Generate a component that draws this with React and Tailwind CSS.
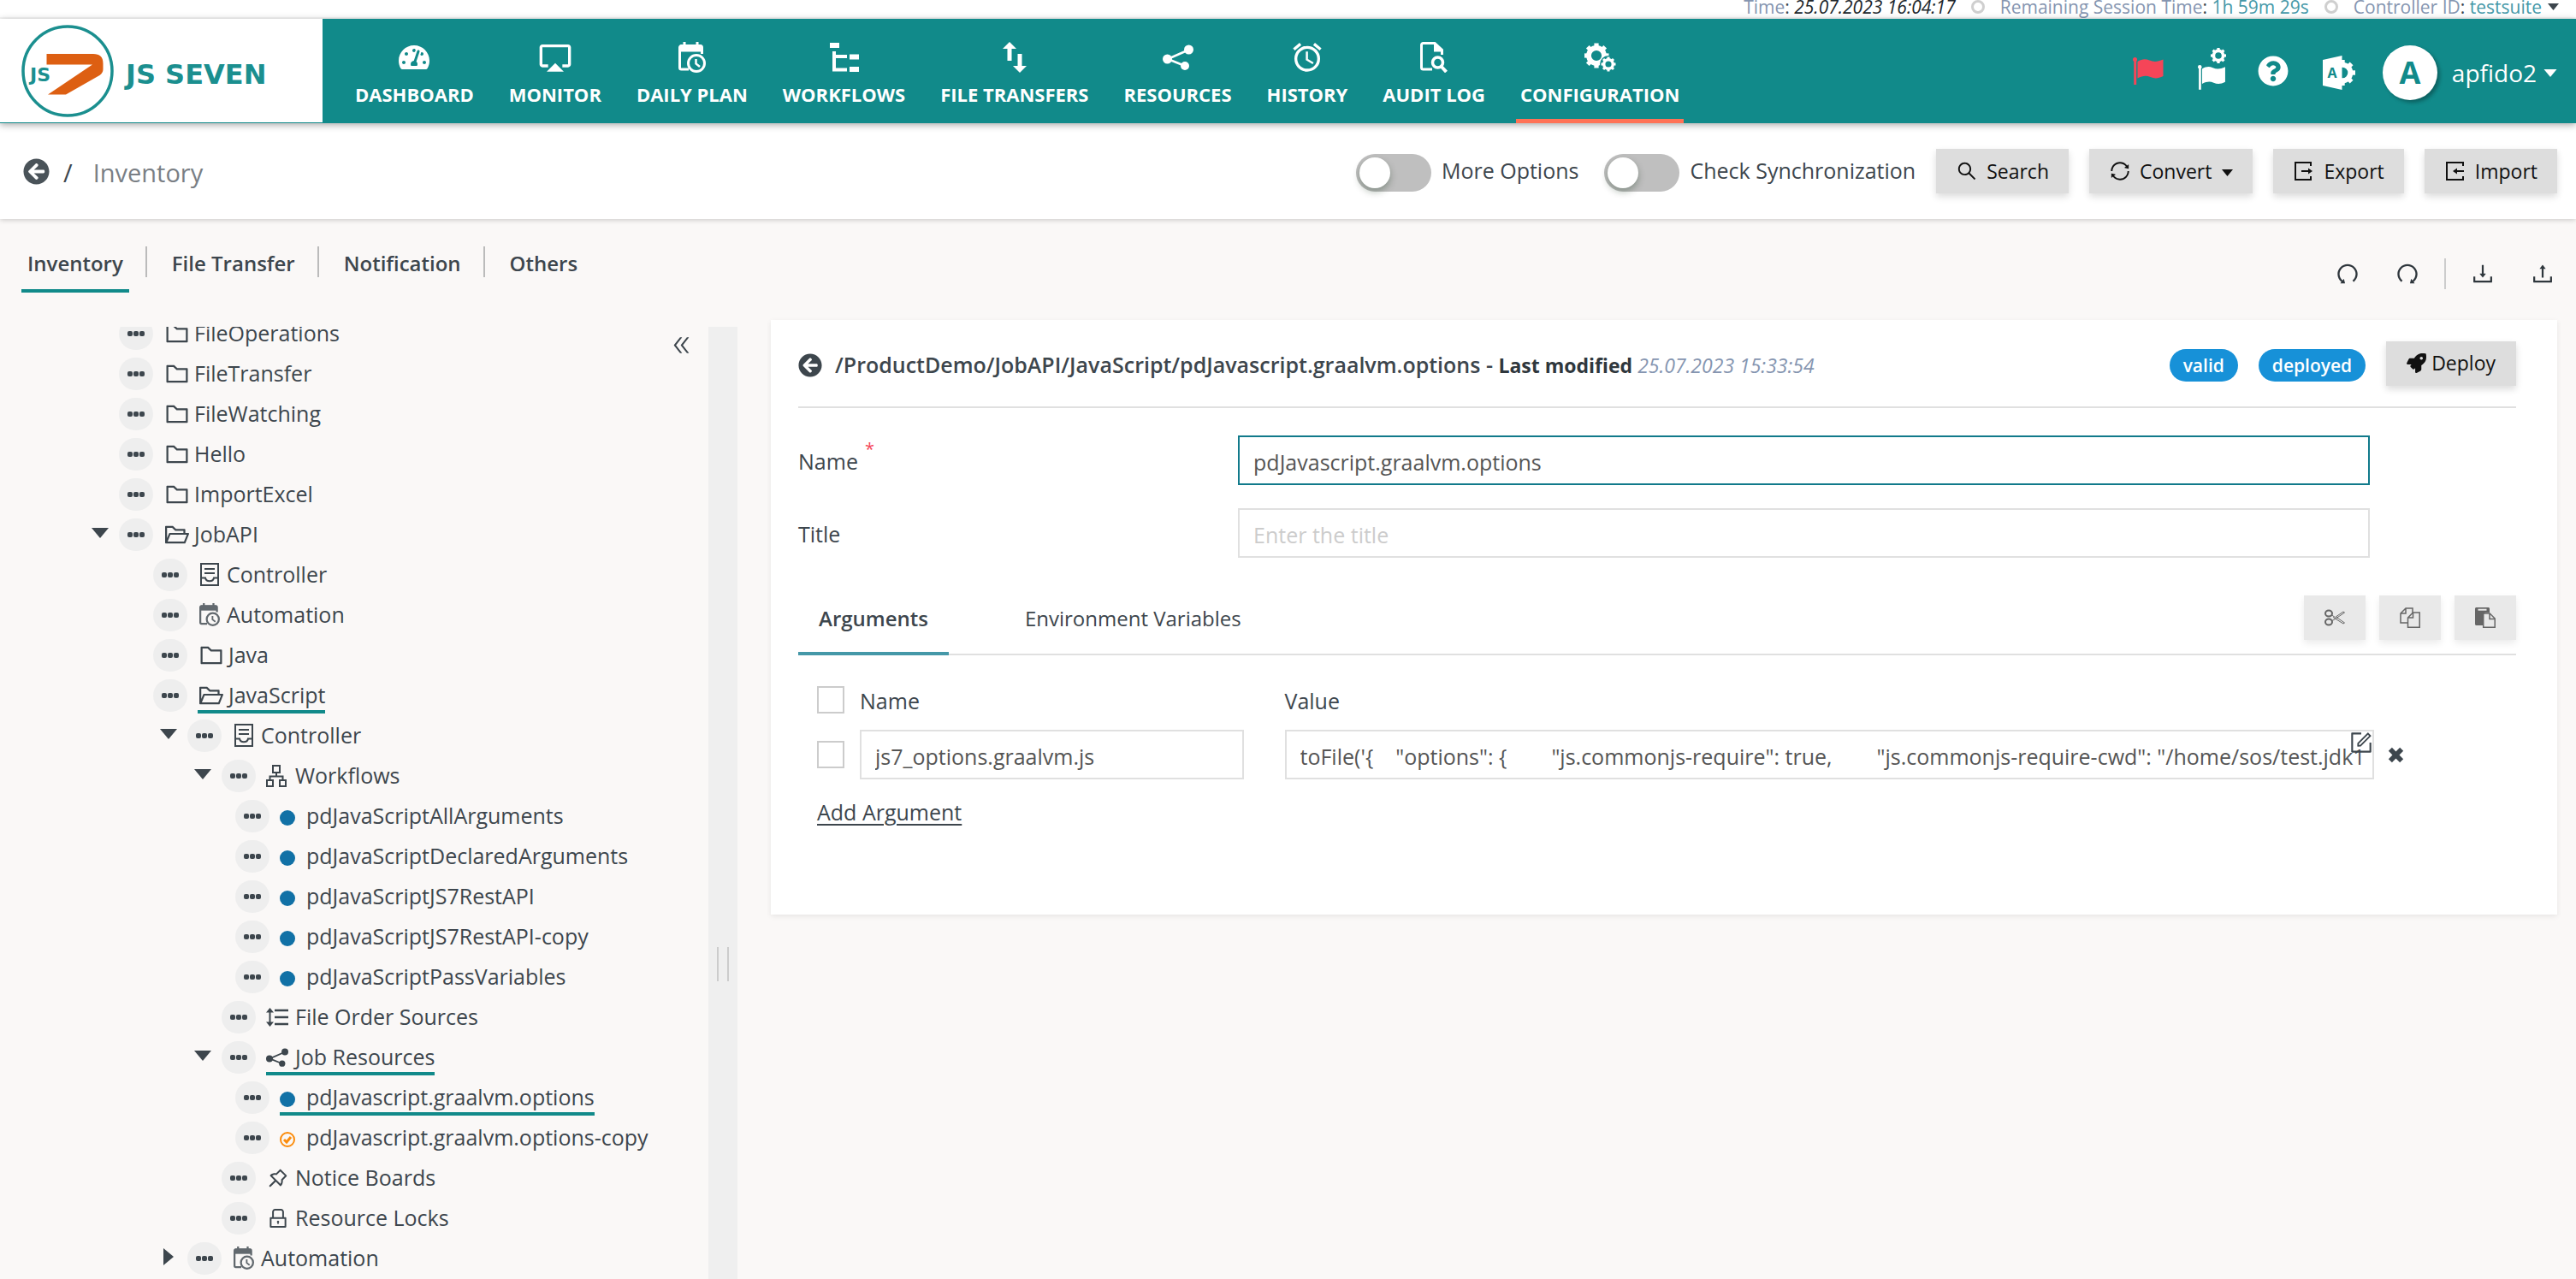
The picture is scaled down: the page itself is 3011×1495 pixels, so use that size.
import { useState } from 'react';
import {
  AiOutlineDoubleLeft,
  AiOutlineDownload,
  AiOutlineFolder,
  AiOutlineFolderOpen,
  AiOutlineForm,
  AiOutlineLock,
  AiOutlinePushpin,
  AiOutlineRedo,
  AiOutlineSearch,
  AiOutlineSync,
  AiOutlineUndo,
  AiOutlineUpload,
} from 'react-icons/ai';
import { FaArrowCircleLeft, FaQuestionCircle, FaRocket, FaTachometerAlt } from 'react-icons/fa';
import { MdAlarm, MdAirplay } from 'react-icons/md';

const teeth = [0, 45, 90, 135, 180, 225, 270, 315];

function Gear({ cx, cy, r }) {
  return (
    <g fill="none" stroke="currentColor">
      <circle cx={cx} cy={cy} r={r * 0.62} strokeWidth={r * 0.4} />
      {teeth.map((a) => (
        <path key={a} d={`M${cx} ${cy - r * 0.7}V${cy - r}`} strokeWidth={r * 0.36} transform={`rotate(${a} ${cx} ${cy})`} />
      ))}
    </g>
  );
}

function CalendarClock({ className }) {
  return (
    <svg className={className} viewBox="0 0 32 36" fill="none" stroke="currentColor">
      <path d="M7 0v6M22 0v6" strokeWidth="3" />
      <path d="M12 32H3.500a2 2 0 0 1-2-2V6.500a2 2 0 0 1 2-2h22a2 2 0 0 1 2 2V14" strokeWidth="3" />
      <path d="M2 4h25v7H2z" fill="currentColor" strokeWidth="1" />
      <circle cx="21" cy="25" r="9.500" strokeWidth="3" />
      <path d="M20.500 20v5.500l4.500 3.500" strokeWidth="2.500" />
    </svg>
  );
}

function TreeStructure({ className }) {
  return (
    <svg className={className} viewBox="0 0 34 34" fill="none" stroke="currentColor">
      <path d="M0 0h11v6H0zM23 13.500h11v6H23zM23 28h11v6H23z" fill="currentColor" stroke="none" />
      <path d="M5 10v21.500h15M5 16h15" strokeWidth="4" />
    </svg>
  );
}

function TransferArrows({ className }) {
  return (
    <svg className={className} viewBox="0 0 28 36" fill="currentColor">
      <path d="M8 0l8 8h-5.500v14h-5V8H0zM20 36l8-8h-5.500V14h-5v14H12z" />
    </svg>
  );
}

function ShareNodes({ className }) {
  return (
    <svg className={className} viewBox="0 0 36 30" fill="currentColor">
      <path d="M6 17L31 6M6 17l20 8" stroke="currentColor" strokeWidth="2.500" />
      <circle cx="5.500" cy="17" r="5.500" />
      <circle cx="30.500" cy="6" r="5.500" />
      <circle cx="26" cy="25" r="5" />
    </svg>
  );
}

function PageSearch({ className }) {
  return (
    <svg className={className} viewBox="0 0 32 36" fill="none" stroke="currentColor" strokeWidth="3">
      <path d="M14 32H3.500a2 2 0 0 1-2-2V3.500a2 2 0 0 1 2-2H17l8.500 8V15" />
      <path d="M16 1v10.500h11z" fill="currentColor" stroke="none" />
      <circle cx="20.500" cy="24" r="6" strokeWidth="3.500" />
      <path d="M24.500 28.500l6 6.500" strokeWidth="4" />
    </svg>
  );
}

function Cogs({ className }) {
  return (
    <svg className={className} viewBox="0 0 37 34">
      <Gear cx={14} cy={15} r={14.5} />
      <circle cx="28" cy="25" r="10" fill="#118a8a" />
      <Gear cx={28} cy={25} r={8.5} />
    </svg>
  );
}

function Flag({ className }) {
  return (
    <svg className={className} viewBox="0 0 36 32" fill="currentColor">
      <circle cx="2.500" cy="2.500" r="2.500" />
      <path d="M1.200 4h3v28h-3z" />
      <path d="M5.500 5c5-3 9-3.500 14-1.500s9 2 16-1V22c-6 3-10 3-15 1s-9-1.500-15 1.500z" />
    </svg>
  );
}

function FlagGear({ className }) {
  return (
    <svg className={className} viewBox="0 0 34 50">
      <g transform="translate(0 20) scale(.9)" fill="currentColor">
        <circle cx="2.500" cy="2.500" r="2.500" />
        <path d="M1.200 4h3v28h-3z" />
        <path d="M5.500 5c5-3 9-3.500 14-1.500s9 2 16-1V22c-6 3-10 3-15 1s-9-1.500-15 1.500z" />
      </g>
      <Gear cx={24} cy={9} r={9} />
    </svg>
  );
}

function AdminSettings({ className }) {
  return (
    <svg className={className} viewBox="0 0 38 40">
      <Gear cx={23} cy={20} r={15} />
      <path d="M0 5L22.500 0v40L0 35z" fill="currentColor" />
      <text x="11" y="26" textAnchor="middle" fontSize="16" fontWeight="700" fontFamily="Open Sans, sans-serif" fill="#118a8a">
        A
      </text>
    </svg>
  );
}

function ExportIcon({ className }) {
  return (
    <svg className={className} viewBox="0 0 26 26" fill="none" stroke="currentColor" strokeWidth="2">
      <path d="M21 7V3H3v20h18v-4" />
      <path d="M10 13h9" />
      <path d="M18 9.500v7l5-3.500z" fill="currentColor" stroke="none" />
    </svg>
  );
}

function ImportIcon({ className }) {
  return (
    <svg className={className} viewBox="0 0 26 26" fill="none" stroke="currentColor" strokeWidth="2">
      <path d="M22 7V3H3v20h19v-4" />
      <path d="M14 13h9" />
      <path d="M15 9.500v7L10 13z" fill="currentColor" stroke="none" />
    </svg>
  );
}

function ControllerIcon({ className }) {
  return (
    <svg className={className} viewBox="0 0 22 27" fill="none" stroke="currentColor" strokeWidth="2">
      <path d="M1 1h20v25H1z" />
      <path d="M5 7h12M5 12h12" />
      <path d="M1 17.500h5c1 5 9 5 10 0h5" />
    </svg>
  );
}

function HierarchyIcon({ className }) {
  return (
    <svg className={className} viewBox="0 0 24 26" fill="none" stroke="currentColor" strokeWidth="2">
      <path d="M8 1h8v8H8zM1 18h7v7H1zM16 18h7v7h-7z" />
      <path d="M12 9v4.500M4.500 18v-4.500h15V18" />
    </svg>
  );
}

function OrderSourcesIcon({ className }) {
  return (
    <svg className={className} viewBox="0 0 26 22" fill="none" stroke="currentColor" strokeWidth="2.500">
      <path d="M10 3h16M10 11h16M10 19h16" />
      <path d="M4.500 3v16" strokeWidth="2" />
      <path d="M4.500 0L9 5.500H0zM4.500 22L9 16.500H0z" fill="currentColor" stroke="none" />
    </svg>
  );
}

function Scissors({ className }) {
  return (
    <svg className={className} viewBox="0 0 24 20" fill="none" stroke="currentColor">
      <ellipse cx="5" cy="5" rx="4" ry="3.500" strokeWidth="2" />
      <ellipse cx="5" cy="15" rx="4" ry="3.500" strokeWidth="2" />
      <path d="M8.500 7l4 2.500L22 3l1.500 1L11 12.500 8.500 13.500M10 9.500L22 17l1.500-1L14 9.500" strokeWidth="1" />
    </svg>
  );
}

function CopyPages({ className }) {
  return (
    <svg className={className} viewBox="0 0 24 24" fill="none" stroke="currentColor" strokeWidth="1.500">
      <path d="M9 18H1V7l6-6h8v5M1 7h6V1" />
      <path d="M9.500 12l6-6h7.700v17.200H9.500zM9.500 12h6V6" />
    </svg>
  );
}

function PastePage({ className }) {
  return (
    <svg className={className} viewBox="0 0 24 24" fill="none" stroke="currentColor" strokeWidth="1.500">
      <path d="M0 1.500C0 .7.700 0 1.500 0h14c.8 0 1.500.7 1.500 1.500V6H12l-3 3v12H1.500C.7 21 0 20.300 0 19.500z" fill="currentColor" stroke="none" />
      <path d="M3.500 2.700h10" stroke="#e9e9e9" strokeWidth="2" />
      <path d="M9.700 7h7.500l6 6v10.200H9.700zM17 7v6.500h6" fill="#e9e9e9" />
    </svg>
  );
}

function RemoveIcon({ className }) {
  return (
    <svg className={className} viewBox="0 0 20 20" fill="none" stroke="currentColor" strokeWidth="6">
      <path d="M3 3l14 14M17 3L3 17" />
    </svg>
  );
}

function CaretDown({ className }) {
  return (
    <svg className={className} viewBox="0 0 20 12" fill="currentColor">
      <path d="M0 0h20L10 12z" />
    </svg>
  );
}

function CaretRight({ className }) {
  return (
    <svg className={className} viewBox="0 0 12 20" fill="currentColor">
      <path d="M0 0v20l12-10z" />
    </svg>
  );
}

function BlueDot() {
  return <span className="mt-1 size-[18px] rounded-full bg-[#1171a6]" />;
}

function DraftDot({ className }) {
  return (
    <svg className={className} viewBox="0 0 18 18" fill="none" stroke="#fb8c0c" strokeWidth="2">
      <circle cx="9" cy="9" r="8" />
      <path d="M5 9l3 3 5-6" strokeWidth="3" />
    </svg>
  );
}

const navItems = [
  { label: 'DASHBOARD', icon: <FaTachometerAlt className="size-9" /> },
  { label: 'MONITOR', icon: <MdAirplay className="size-10" /> },
  { label: 'DAILY PLAN', icon: <CalendarClock className="h-9 w-8" /> },
  { label: 'WORKFLOWS', icon: <TreeStructure className="h-[34px] w-[34px]" /> },
  { label: 'FILE TRANSFERS', icon: <TransferArrows className="h-9 w-7" /> },
  { label: 'RESOURCES', icon: <ShareNodes className="h-[30px] w-9" /> },
  { label: 'HISTORY', icon: <MdAlarm className="size-10" /> },
  { label: 'AUDIT LOG', icon: <PageSearch className="h-9 w-8" /> },
  { label: 'CONFIGURATION', icon: <Cogs className="h-[34px] w-[37px]" />, active: true },
];

const indent = {
  1: 'pl-[107px]',
  2: 'pl-[147px]',
  3: 'pl-[187px]',
  4: 'pl-[227px]',
  leaf: 'pl-[243px]',
};

const typeIcons = {
  folder: <AiOutlineFolder className="size-8" />,
  open: <AiOutlineFolderOpen className="size-8" />,
  controller: <ControllerIcon className="ml-[3px] h-[27px] w-[22px]" />,
  automation: <CalendarClock className="ml-[2px] h-[27px] w-6 opacity-80" />,
  workflows: <HierarchyIcon className="h-[26px] w-6" />,
  sources: <OrderSourcesIcon className="h-[22px] w-[26px]" />,
  resources: <ShareNodes className="h-[22px] w-[26px]" />,
  boards: <AiOutlinePushpin className="size-7" />,
  locks: <AiOutlineLock className="size-7" />,
  deployed: <BlueDot />,
  draft: <DraftDot className="mt-1 size-[18px]" />,
};

const typeWidths = {
  folder: 'w-8',
  open: 'w-8',
  deployed: 'w-[27px]',
  draft: 'w-[27px]',
};

const nodes = [
  { label: 'FileOperations', level: 1, type: 'folder' },
  { label: 'FileTransfer', level: 1, type: 'folder' },
  { label: 'FileWatching', level: 1, type: 'folder' },
  { label: 'Hello', level: 1, type: 'folder' },
  { label: 'ImportExcel', level: 1, type: 'folder' },
  { label: 'JobAPI', level: 1, type: 'open', caret: 'down' },
  { label: 'Controller', level: 2, type: 'controller' },
  { label: 'Automation', level: 2, type: 'automation' },
  { label: 'Java', level: 2, type: 'folder' },
  { label: 'JavaScript', level: 2, type: 'open', active: true },
  { label: 'Controller', level: 3, type: 'controller', caret: 'down' },
  { label: 'Workflows', level: 4, type: 'workflows', caret: 'down' },
  { label: 'pdJavaScriptAllArguments', level: 'leaf', type: 'deployed' },
  { label: 'pdJavaScriptDeclaredArguments', level: 'leaf', type: 'deployed' },
  { label: 'pdJavaScriptJS7RestAPI', level: 'leaf', type: 'deployed' },
  { label: 'pdJavaScriptJS7RestAPI-copy', level: 'leaf', type: 'deployed' },
  { label: 'pdJavaScriptPassVariables', level: 'leaf', type: 'deployed' },
  { label: 'File Order Sources', level: 4, type: 'sources' },
  { label: 'Job Resources', level: 4, type: 'resources', caret: 'down', active: true },
  { label: 'pdJavascript.graalvm.options', level: 'leaf', type: 'deployed', active: true },
  { label: 'pdJavascript.graalvm.options-copy', level: 'leaf', type: 'draft' },
  { label: 'Notice Boards', level: 4, type: 'boards' },
  { label: 'Resource Locks', level: 4, type: 'locks' },
  { label: 'Automation', level: 3, type: 'automation', caret: 'right' },
];

function TopBar() {
  return (
    <div className="flex h-[22px] shrink-0 items-start justify-end border-b-2 border-[#f7f7f7] bg-white pr-5 text-[21px] leading-4 whitespace-nowrap text-[#8595b0]">
      <span>Time<span className="text-[#3d464d]">: <em className="text-[#20262b]">25.07.2023 16:04:17</em></span></span>
      <span className="mx-[18px] size-4 rounded-full border-3 border-[#cfcfcf]" />
      <span>Remaining Session Time<span className="text-[#3d464d]">:</span> <span className="text-[#4598a8]">1h 59m 29s</span></span>
      <span className="mx-[18px] size-4 rounded-full border-3 border-[#cfcfcf]" />
      <button type="button" className="flex gap-[7px]">
        <span>Controller ID<span className="text-[#3d464d]">:</span> <span className="text-[#4598a8]">testsuite</span></span>
        <CaretDown className="mt-1 h-2 w-[13px] text-[#3d464d]" />
      </button>
    </div>
  );
}

function Header() {
  return (
    <header className="z-20 flex h-[122px] shrink-0 bg-[#118a8a] text-white shadow-[0_2px_8px_rgba(0,0,0,0.35)]">
      <a href="#home" aria-label="JS7 JS Seven" className="mb-px flex w-[377px] shrink-0 items-center gap-[14px] bg-white pl-[25px]">
        <svg className="size-[108px]" viewBox="0 0 108 108">
          <circle cx="54" cy="54" r="52" fill="none" stroke="#1b8f8f" strokeWidth="3.500" />
          <path d="M29.500 34H84q11.500 0 11.500 11v7q0 4-4 7L52 81.500H31L83 46.500H29.500z" fill="#dd5f12" />
          <text x="10" y="66" fontSize="22" fontWeight="700" fontFamily="DejaVu Sans, sans-serif" fill="#1b8f8f" stroke="#fff" strokeWidth="2" paintOrder="stroke">
            JS
          </text>
        </svg>
        <span className="mt-2 font-['DejaVu_Sans',sans-serif] text-[32px] font-bold whitespace-nowrap text-[#1b8f8f]">JS SEVEN</span>
      </a>
      <nav className="flex gap-[31px] pl-[33px]">
        {navItems.map((item) => (
          <a key={item.label} href={`#${item.label.toLowerCase().replace(' ', '-')}`} className={`flex flex-col items-center border-b-5 px-[5px] pt-[25px] ${item.active ? 'border-[#ff7256]' : 'border-transparent'}`}>
            <span className="flex h-10 items-center">{item.icon}</span>
            <span className="mt-[7px] text-[22px] leading-8 font-bold whitespace-nowrap">{item.label}</span>
          </a>
        ))}
      </nav>
      <div className="ml-auto flex items-center pr-[22px]">
        <button type="button" aria-label="Approvals"><Flag className="h-8 w-9 text-[#f54558]" /></button>
        <button type="button" aria-label="Approval settings" className="ml-10 pb-1"><FlagGear className="h-[50px] w-[34px]" /></button>
        <button type="button" aria-label="Help" className="ml-9"><FaQuestionCircle className="size-9" /></button>
        <button type="button" aria-label="Administration" className="ml-10 pt-1"><AdminSettings className="h-10 w-[38px]" /></button>
        <span className="mt-1 ml-8 flex size-16 items-center justify-center rounded-full bg-white text-[36px] font-bold text-[#118a8a] shadow-[3px_3px_4px_rgba(0,0,0,0.3)]">A</span>
        <button type="button" className="mt-1 ml-[17px] flex items-center gap-2 text-[28px]">
          apfido2
          <CaretDown className="h-[9px] w-4" />
        </button>
      </div>
    </header>
  );
}

function Toggle({ label }) {
  return (
    <label className="flex items-center gap-3 text-[25px] whitespace-nowrap">
      <input
        type="checkbox"
        role="switch"
        className="relative mt-1 h-11 w-[88px] appearance-none rounded-full bg-[#bfbfbf] before:absolute before:top-1 before:left-1 before:size-9 before:rounded-full before:bg-white before:shadow-[0_4px_8px_rgba(0,35,11,0.3)] before:content-['']"
      />
      {label}
    </label>
  );
}

function ActionButton({ icon, children }) {
  return (
    <button type="button" className="flex h-[52px] items-center gap-[10px] bg-[#dddddd] px-[23px] text-[23px] whitespace-nowrap text-[#111] shadow-[0_4px_8px_rgba(0,0,0,0.14)]">
      {icon}
      {children}
    </button>
  );
}

function SubHeader() {
  return (
    <div className="z-10 flex h-28 shrink-0 items-center justify-between bg-white pr-[22px] pl-[27px] shadow-[0_1px_6px_rgba(0,0,0,0.2)]">
      <div className="flex items-center text-[29px]">
        <a href="#back" aria-label="Back"><FaArrowCircleLeft className="size-[31px] text-[#4a5359]" /></a>
        <span className="ml-4 pt-1">/</span>
        <h1 className="ml-6 pt-1 text-[#7a7f85]">Inventory</h1>
      </div>
      <div className="flex items-center gap-6">
        <div className="flex items-center gap-[30px]">
          <Toggle label="More Options" />
          <Toggle label="Check Synchronization" />
        </div>
        <ActionButton icon={<AiOutlineSearch className="size-[26px]" />}>Search</ActionButton>
        <ActionButton icon={<AiOutlineSync className="size-[26px]" />}>
          <span className="flex items-center gap-3">
            Convert
            <CaretDown className="mt-1 h-2 w-[13px]" />
          </span>
        </ActionButton>
        <ActionButton icon={<ExportIcon className="size-[26px]" />}>Export</ActionButton>
        <ActionButton icon={<ImportIcon className="size-[26px]" />}>Import</ActionButton>
      </div>
    </div>
  );
}

function SectionTabs() {
  const tabs = ['Inventory', 'File Transfer', 'Notification', 'Others'];
  return (
    <div className="flex h-[118px] shrink-0 items-start justify-between pt-8 pr-6 pl-[25px]">
      <nav className="flex items-start text-[24px] leading-10 font-semibold">
        {tabs.map((tab, i) => (
          <div key={tab} className="flex items-start">
            {i > 0 && <span className="mr-[22px] ml-[19px] h-9 w-[2px] bg-[#bbb]" />}
            <a href={`#${tab.toLowerCase().replace(' ', '-')}`} className={`h-[54px] border-b-4 px-[7px] whitespace-nowrap ${i === 0 ? 'border-[#118a8a]' : 'border-transparent'}`}>
              {tab}
            </a>
          </div>
        ))}
      </nav>
      <div className="mt-3 flex h-10 items-center text-[#2f373d]">
        <button type="button" aria-label="Undo"><AiOutlineUndo className="size-[30px]" /></button>
        <button type="button" aria-label="Redo" className="ml-10"><AiOutlineRedo className="size-[30px]" /></button>
        <span className="mx-7 h-9 w-[2px] bg-[#ccc]" />
        <button type="button" aria-label="Download"><AiOutlineDownload className="size-[30px]" /></button>
        <button type="button" aria-label="Upload" className="ml-10"><AiOutlineUpload className="size-[30px]" /></button>
      </div>
    </div>
  );
}

function TreeNode({ node }) {
  return (
    <li className={`flex h-[47px] items-center ${indent[node.level]}`}>
      {node.caret ? (
        <button type="button" aria-label={`Toggle ${node.label}`} aria-expanded={node.caret === 'down'} className="mr-3 flex w-5 justify-center pb-1">
          {node.caret === 'down' ? <CaretDown className="h-3 w-5" /> : <CaretRight className="h-5 w-3" />}
        </button>
      ) : (
        <span className="mr-3 w-5" />
      )}
      <button type="button" aria-label={`${node.label} actions`} className="mr-3 flex h-[38px] w-10 items-center justify-center gap-px rounded-full bg-[#eeeeee]">
        <span className="size-[6px] rounded-[2px] bg-[#3d464d]" />
        <span className="size-[6px] rounded-[2px] bg-[#3d464d]" />
        <span className="size-[6px] rounded-[2px] bg-[#3d464d]" />
      </button>
      <a href="#node" className={`flex h-[43px] items-center gap-1 border-y-4 border-transparent whitespace-nowrap ${node.active ? 'border-b-[#118a8a]' : ''}`}>
        <span className={`flex shrink-0 items-center ${typeWidths[node.type] || 'w-[30px]'}`}>{typeIcons[node.type]}</span>
        {node.label}
      </a>
    </li>
  );
}

function Sidebar() {
  return (
    <aside className="flex w-[27.5%] shrink-0 items-start overflow-hidden">
      <ul className="-mt-4 grow">
        {nodes.map((node, i) => (
          <TreeNode key={i} node={node} />
        ))}
      </ul>
      <button type="button" aria-label="Collapse panel" className="mt-2 mr-[18px]">
        <AiOutlineDoubleLeft className="size-[27px]" />
      </button>
    </aside>
  );
}

function ClipboardButton({ label, icon }) {
  return (
    <button type="button" aria-label={label} className="flex h-[52px] w-[72px] items-center justify-center bg-[#e9e9e9] text-[#666] shadow-[0_4px_8px_rgba(0,0,0,0.08)]">
      {icon}
    </button>
  );
}

function Checkbox({ label }) {
  return <input type="checkbox" aria-label={label} className="block size-8 appearance-none border-2 border-[#cccccc] bg-white" />;
}

const fieldClass = 'h-[58px] border-2 border-[#e0e0e0] bg-white pt-1 pl-4 text-[25px] text-[#555] outline-none placeholder:text-[#ccc]';

function ArgumentsTable() {
  const [name, setName] = useState('js7_options.graalvm.js');
  const [value, setValue] = useState(`toFile('{    "options": {        "js.commonjs-require": true,        "js.commonjs-require-cwd": "/home/sos/test.jdk1`);

  return (
    <div className="pt-6 pb-[104px] pl-[22px]">
      <table className="w-full table-fixed text-left">
        <colgroup>
          <col className="w-[50px]" />
          <col className="w-[25%]" />
          <col />
          <col className="w-[166px]" />
        </colgroup>
        <thead>
          <tr className="h-[55px]">
            <th><Checkbox label="Select all arguments" /></th>
            <th className="pt-1 font-normal">Name</th>
            <th className="pt-1 font-normal">Value</th>
            <th aria-label="Actions" />
          </tr>
        </thead>
        <tbody>
          <tr className="h-[74px]">
            <td><Checkbox label="Select argument" /></td>
            <td className="pr-12">
              <input aria-label="Argument name" value={name} onChange={(e) => setName(e.target.value)} className={`${fieldClass} block w-full pr-4`} />
            </td>
            <td className="relative">
              <input aria-label="Argument value" value={value} onChange={(e) => setValue(e.target.value)} className={`${fieldClass} block w-full`} />
              <button type="button" aria-label="Edit value" className="absolute top-2 right-0">
                <AiOutlineForm className="size-[30px]" />
              </button>
            </td>
            <td>
              <button type="button" aria-label="Remove argument" className="ml-4 block">
                <RemoveIcon className="size-[19px]" />
              </button>
            </td>
          </tr>
        </tbody>
      </table>
      <button type="button" className="mt-3 block pt-0.5 leading-8 underline underline-offset-4">Add Argument</button>
    </div>
  );
}

function ResourceCard() {
  const [name, setName] = useState('pdJavascript.graalvm.options');
  const [title, setTitle] = useState('');

  return (
    <section className="mr-[22px] ml-[39px] -mt-2 grow self-start bg-white pr-12 pl-8 shadow-[0_2px_6px_rgba(0,0,0,0.08)]">
      <div className="flex h-[103px] items-center justify-between border-b-2 border-[#e0e0e0] pt-1">
        <div className="flex items-center gap-[15px] whitespace-nowrap">
          <a href="#back" aria-label="Back to folder"><FaArrowCircleLeft className="size-7" /></a>
          <h2>
            <span className="font-semibold">/ProductDemo/JobAPI/JavaScript/pdJavascript.graalvm.options - </span>
            <span className="text-[23px] font-bold text-[#2f373d]">Last modified </span>
            <em className="text-[23px] text-[#8595b0]">25.07.2023 15:33:54</em>
          </h2>
        </div>
        <div className="flex items-center gap-6">
          <span className="rounded-full bg-[#1791d8] px-4 text-[21px] leading-[38px] font-semibold text-white">valid</span>
          <span className="rounded-full bg-[#1791d8] px-4 text-[21px] leading-[38px] font-semibold text-white">deployed</span>
          <button type="button" className="mb-1 flex h-[52px] items-center gap-[6px] bg-[#dddddd] px-6 text-[23px] text-[#111] shadow-[0_4px_8px_rgba(0,0,0,0.14)]">
            <FaRocket className="size-[23px]" />
            Deploy
          </button>
        </div>
      </div>

      <div className="mt-8 flex items-center">
        <label htmlFor="resource-name" className="flex w-[25.6%] gap-2 pt-1">
          Name <span className="-mt-2 text-[20px] leading-6 text-[#f54558]">*</span>
        </label>
        <input id="resource-name" value={name} onChange={(e) => setName(e.target.value)} className="h-[58px] w-[65.9%] border-2 border-[#117a8b] bg-white px-4 pt-1 text-[25px] text-[#555] outline-none" />
      </div>
      <div className="mt-[27px] flex items-center">
        <label htmlFor="resource-title" className="w-[25.6%] pt-1">Title</label>
        <input id="resource-title" value={title} onChange={(e) => setTitle(e.target.value)} placeholder="Enter the title" className={`${fieldClass} w-[65.9%] pr-4`} />
      </div>

      <div className="mt-7 flex h-[86px] items-center justify-between border-b-2 border-[#e0e0e0]">
        <div role="tablist" className="-mb-[2px] flex gap-[65px] self-stretch text-[24px]">
          <button type="button" role="tab" aria-selected="true" className="border-y-4 border-transparent border-b-[#4598a8] px-6 font-semibold">Arguments</button>
          <button type="button" role="tab" aria-selected="false" className="border-y-4 border-transparent px-6">Environment Variables</button>
        </div>
        <div className="flex gap-4">
          <ClipboardButton label="Cut" icon={<Scissors className="h-5 w-6" />} />
          <ClipboardButton label="Copy" icon={<CopyPages className="size-6" />} />
          <ClipboardButton label="Paste" icon={<PastePage className="size-6" />} />
        </div>
      </div>

      <ArgumentsTable />
    </section>
  );
}

export default function App() {
  return (
    <div className="flex h-screen flex-col overflow-hidden bg-[#faf8f7] font-['Open_Sans',sans-serif] text-[25px] text-[#3d464d]">
      <TopBar />
      <Header />
      <SubHeader />
      <SectionTabs />
      <main className="flex min-h-0 grow pt-2">
        <Sidebar />
        <div className="flex w-[34px] shrink-0 justify-center bg-[#efefef] pt-[725px]">
          <span className="h-10 w-[14px] border-x-2 border-[#ccc]" />
        </div>
        <ResourceCard />
      </main>
    </div>
  );
}
